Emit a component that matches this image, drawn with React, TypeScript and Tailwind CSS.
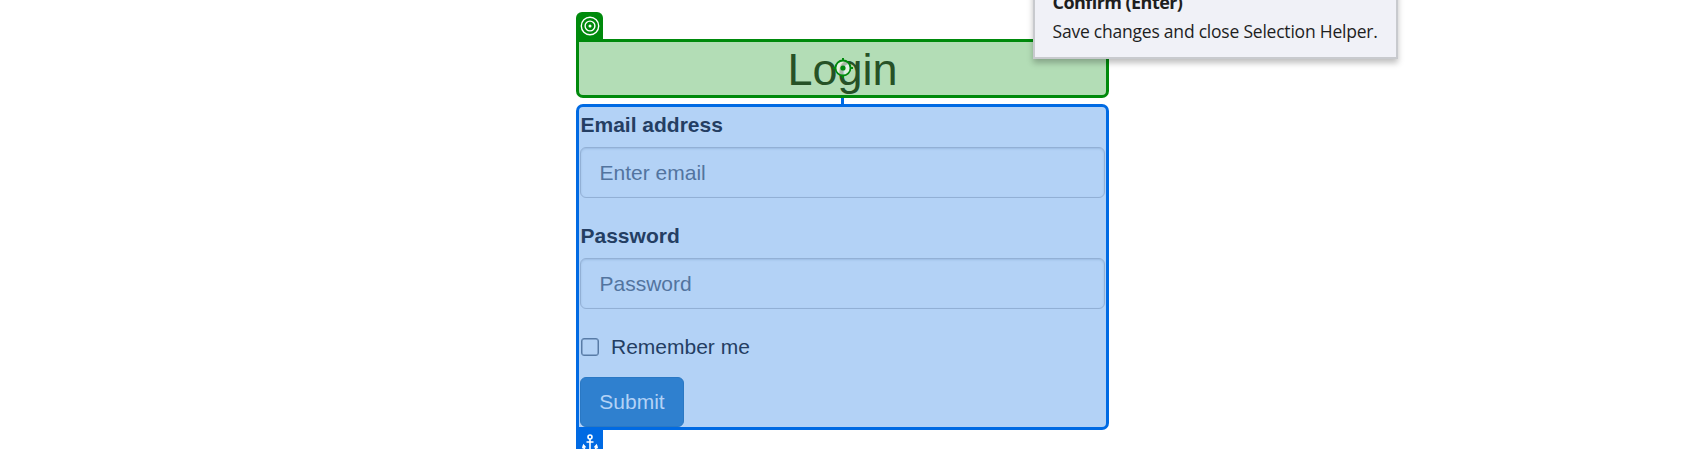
function TargetIcon() {
  return (
    <svg className="h-5 w-5" viewBox="0 0 20 20" fill="none" stroke="white" strokeWidth="1.4">
      <circle cx="10" cy="10" r="8.7" />
      <circle cx="10" cy="10" r="4.9" />
      <circle cx="10" cy="10" r="1.5" fill="white" stroke="none" />
    </svg>
  );
}

function AnchorIcon() {
  return (
    <svg className="h-5 w-5 shrink-0" viewBox="0 0 20 20" fill="none" stroke="white" strokeWidth="1.6">
      <circle cx="10" cy="3" r="2" />
      <path d="M10 5v13M6.500 8h7M3.500 11.500c0 4 3 6 6.500 6.500c3.500-.5 6.500-2.500 6.500-6.500" />
      <path d="M3.300 9.800L6.300 13.200L1.800 14.500ZM16.700 9.800L13.700 13.200L18.200 14.500Z" fill="white" stroke="none" />
    </svg>
  );
}

function CrosshairIcon() {
  return (
    <svg className="absolute left-[254px] top-[16px] h-5 w-5" viewBox="0 0 20 20" fill="none">
      <circle cx="10" cy="10" r="7.5" fill="white" fillOpacity="0.6" stroke="#008a0c" strokeWidth="1.8" />
      <path d="M10 0v3M10 17v3M0 10h3M17 10h3" stroke="#008a0c" strokeWidth="2" />
      <circle cx="10" cy="10" r="2.600" fill="#008a0c" />
    </svg>
  );
}

function Field({ label, placeholder, type }: { label: string; placeholder: string; type: string }) {
  return (
    <label className="flex w-[525px] flex-col">
      <span className="h-[37px] pl-[0.5px] text-[21px] leading-[30px] font-bold text-[#243e63]">{label}</span>
      <input
        type={type}
        placeholder={placeholder}
        className="h-[51px] rounded-[6px] border border-[#92b0d5] px-[18.5px] text-[21px] text-[#52749f] shadow-[inset_0_1px_2px_rgba(50,90,140,0.18)] placeholder:text-[#52749f] placeholder:opacity-100"
      />
    </label>
  );
}

export default function App() {
  return (
    <main className="relative h-[449px] w-[1686px] overflow-hidden bg-white pt-3 pl-[576px] font-['Liberation_Sans',sans-serif]">
      <div className="flex w-[533px] flex-col">
        <div className="flex h-[27px] w-[27px] items-center justify-center rounded-t-[6px] bg-[#008a0c]">
          <TargetIcon />
        </div>
        <section className="relative h-[59px] rounded-[7px] rounded-tl-none border-[3px] border-[#008a0c] bg-[#b3ddb6] text-center">
          <h2 className="text-[45px] leading-[55px] text-[#265126]">Login</h2>
          <CrosshairIcon />
        </section>
        <div className="h-[6px] w-[3px] self-center bg-[#006ae3]" />
        <section className="h-[326px] rounded-[7px] rounded-bl-none border-[3px] border-[#006ae3] bg-[#b3d2f6] pt-[3px] pl-px">
          <form className="flex flex-col items-start">
            <Field label="Email address" placeholder="Enter email" type="email" />
            <div className="h-[23px]" />
            <Field label="Password" placeholder="Password" type="password" />
            <label className="mt-[23px] flex h-[30px] items-center gap-[12px] pl-px text-[21px] text-[#243e63]">
              <input type="checkbox" className="h-[18px] w-[18px] appearance-none rounded-[3px] border-[1.5px] border-[#587ba6] shadow-[inset_0_0_0_0.5px_#587ba6]" />
              Remember me
            </label>
            <button type="button" className="mt-[15px] h-[50px] w-[104px] rounded-[6px] border border-[#2a78c4] bg-[#2f80cf] text-[21px] text-[#b3d2f6]">
              Submit
            </button>
          </form>
        </section>
        <div className="flex h-[27px] w-[27px] shrink-0 justify-center bg-[#006ae3] pt-1">
          <AnchorIcon />
        </div>
      </div>
      <div className="absolute -top-[20px] left-[1033px] h-[79px] w-[365px] border-2 border-[#c8cace] bg-[#f0f1f7] pl-[17.5px] font-['Open_Sans','Noto_Sans',sans-serif] text-[17.5px] whitespace-nowrap text-[#1e1e1e] shadow-[0_4px_6px_rgba(0,0,0,0.25)]">
        <p className="mt-[7px] text-[18px] leading-[26px] font-bold tracking-[-0.55px]">Confirm (Enter)</p>
        <p className="mt-[3px] leading-[26px] tracking-[-0.22px]">Save changes and close Selection Helper.</p>
      </div>
    </main>
  );
}
